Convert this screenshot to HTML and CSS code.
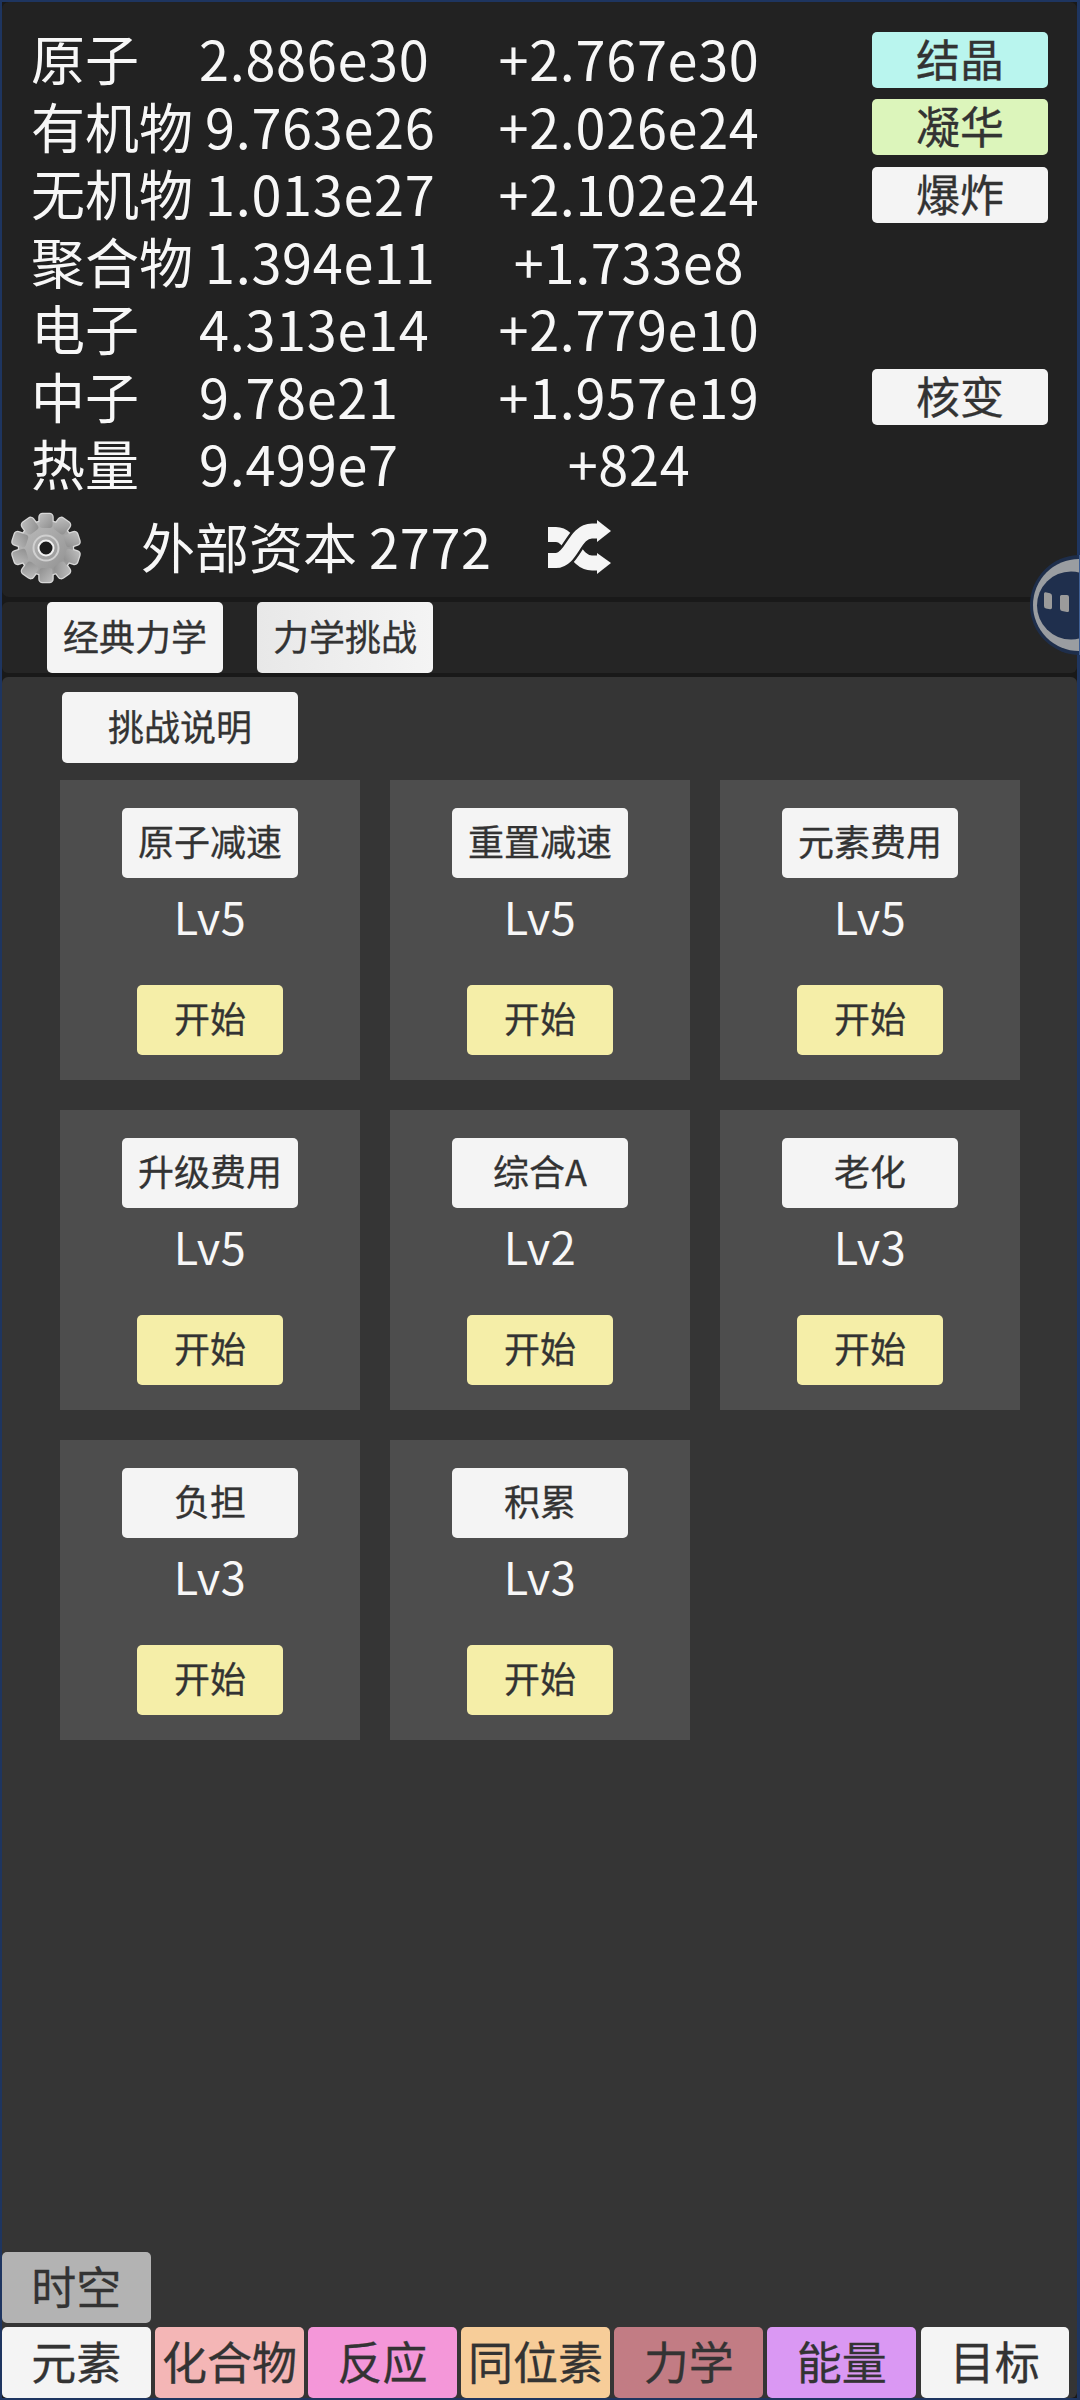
FILE: index.html
```html
<!DOCTYPE html>
<html lang="zh">
<head>
<meta charset="utf-8">
<title>力学挑战</title>
<link rel="stylesheet" href="styles.css">
</head>
<body>
<div class="app">
  <section class="stats">
    <div class="row"><div class="info"><span class="name">原子</span><span class="num">2.886e30</span></div><div class="rate num">+2.767e30</div><button class="btn side cyan">结晶</button></div>
    <div class="row"><div class="info"><span class="name">有机物</span><span class="num">9.763e26</span></div><div class="rate num">+2.026e24</div><button class="btn side lime">凝华</button></div>
    <div class="row"><div class="info"><span class="name">无机物</span><span class="num">1.013e27</span></div><div class="rate num">+2.102e24</div><button class="btn side">爆炸</button></div>
    <div class="row"><div class="info"><span class="name">聚合物</span><span class="num">1.394e11</span></div><div class="rate num">+1.733e8</div></div>
    <div class="row"><div class="info"><span class="name">电子</span><span class="num">4.313e14</span></div><div class="rate num">+2.779e10</div></div>
    <div class="row"><div class="info"><span class="name">中子</span><span class="num">9.78e21</span></div><div class="rate num">+1.957e19</div><button class="btn side">核变</button></div>
    <div class="row"><div class="info"><span class="name">热量</span><span class="num">9.499e7</span></div><div class="rate num">+824</div></div>
    <div class="capital">
      <svg class="gear" viewBox="0 0 72 74" aria-hidden="true">
        <defs>
          <linearGradient id="gearFill" x1="0" y1="0" x2="1" y2="1">
            <stop offset="0" stop-color="#bdbdbd"/>
            <stop offset="1" stop-color="#8f8f8f"/>
          </linearGradient>
          <g id="gearShape">
            <circle cx="36" cy="37" r="27"/>
            <rect x="29.5" y="3" width="13" height="14" rx="3"/>
            <rect x="29.5" y="3" width="13" height="14" rx="3" transform="rotate(36 36 37)"/>
            <rect x="29.5" y="3" width="13" height="14" rx="3" transform="rotate(72 36 37)"/>
            <rect x="29.5" y="3" width="13" height="14" rx="3" transform="rotate(108 36 37)"/>
            <rect x="29.5" y="3" width="13" height="14" rx="3" transform="rotate(144 36 37)"/>
            <rect x="29.5" y="3" width="13" height="14" rx="3" transform="rotate(180 36 37)"/>
            <rect x="29.5" y="3" width="13" height="14" rx="3" transform="rotate(216 36 37)"/>
            <rect x="29.5" y="3" width="13" height="14" rx="3" transform="rotate(252 36 37)"/>
            <rect x="29.5" y="3" width="13" height="14" rx="3" transform="rotate(288 36 37)"/>
            <rect x="29.5" y="3" width="13" height="14" rx="3" transform="rotate(324 36 37)"/>
          </g>
        </defs>
        <use href="#gearShape" fill="#d8d8d8" stroke="#d8d8d8" stroke-width="2.5"/>
        <use href="#gearShape" fill="url(#gearFill)"/>
        <circle cx="36" cy="37" r="12.5" fill="none" stroke="#d0d0d0" stroke-width="2"/>
        <circle cx="36" cy="37" r="7.5" fill="#1c1c1c" stroke="#f0f0f0" stroke-width="2"/>
      </svg>
      <span class="capital-text">外部资本 <span class="num">2772</span></span>
      <svg class="shuffle" viewBox="0 0 64 56" aria-hidden="true">
        <path d="M0 14.5H8C24 14.5 26 43 44 43H52" fill="none" stroke="#f5f5f5" stroke-width="15"/>
        <polygon points="49,33 63,43 49,54" fill="#f5f5f5"/>
        <path d="M0 40.5H8C24 40.5 26 11 44 11H52" fill="none" stroke="#222222" stroke-width="20"/>
        <path d="M0 40.5H8C24 40.5 26 11 44 11H52" fill="none" stroke="#f5f5f5" stroke-width="15"/>
        <polygon points="49,0 63,11 49,22" fill="#f5f5f5"/>
      </svg>
    </div>
  </section>

  <nav class="subtabs">
    <button class="btn tab">经典力学</button>
    <button class="btn tab shaded">力学挑战</button>
  </nav>

  <main class="main">
    <div class="content">
      <button class="btn help">挑战说明</button>
      <div class="cards">
        <div class="card"><button class="btn card-name">原子减速</button><div class="level">Lv5</div><button class="btn start">开始</button></div>
        <div class="card"><button class="btn card-name">重置减速</button><div class="level">Lv5</div><button class="btn start">开始</button></div>
        <div class="card"><button class="btn card-name">元素费用</button><div class="level">Lv5</div><button class="btn start">开始</button></div>
        <div class="card"><button class="btn card-name">升级费用</button><div class="level">Lv5</div><button class="btn start">开始</button></div>
        <div class="card"><button class="btn card-name">综合A</button><div class="level">Lv2</div><button class="btn start">开始</button></div>
        <div class="card"><button class="btn card-name">老化</button><div class="level">Lv3</div><button class="btn start">开始</button></div>
        <div class="card"><button class="btn card-name">负担</button><div class="level">Lv3</div><button class="btn start">开始</button></div>
        <div class="card"><button class="btn card-name">积累</button><div class="level">Lv3</div><button class="btn start">开始</button></div>
      </div>
    </div>
    <div class="bottom">
      <button class="btn nav spacetime">时空</button>
      <div class="nav-row">
        <button class="btn nav">元素</button>
        <button class="btn nav pink">化合物</button>
        <button class="btn nav magenta">反应</button>
        <button class="btn nav orange">同位素</button>
        <button class="btn nav rose">力学</button>
        <button class="btn nav violet">能量</button>
        <button class="btn nav">目标</button>
      </div>
    </div>
  </main>

  <svg class="float" viewBox="0 0 50 100" aria-hidden="true">
    <circle cx="50" cy="50" r="50" fill="#1e3050" fill-opacity="0.9"/>
    <circle cx="49" cy="50" r="46" fill="#9a9da1"/>
    <circle cx="41" cy="50.5" r="34" fill="#1f2f4d"/>
    <rect x="49" y="0" width="1" height="100" fill="#3f5f94"/>
    <path d="M15.5 37.2L20 38.2Q22 38.7 22 40.7V52.5Q22 54.5 20 54.2L16 53.5Q14 53 14 51V38.7Q14 37 15.5 37.2Z" fill="#9b9b9b"/>
    <path d="M31.5 40H37Q39 40 39 42V55.5Q39 57.5 37 57L32 56Q30 55.5 30 53.5V41.5Q30 40 31.5 40Z" fill="#9b9b9b"/>
  </svg>
</div>
</body>
</html>
```
FILE: styles.css
```css
* {
  box-sizing: border-box;
}

html,
body {
  margin: 0;
  height: 100%;
}

body {
  background: #1e3560;
  font-family: "Noto Sans CJK SC", "Noto Sans", sans-serif;
  color: #f7f7f7;
  overflow: hidden;
}

.app {
  position: relative;
  height: 2400px;
  border-style: solid;
  border-color: #1e3560;
  border-width: 2px 3px 2px 2px;
  background: #191919;
  display: flex;
  flex-direction: column;
}

.btn {
  display: block;
  margin: 0;
  padding: 0 0 4px;
  border: 0;
  border-radius: 5px;
  background: #f4f4f4;
  color: #333;
  font-family: inherit;
  line-height: 1.2;
  white-space: nowrap;
  -webkit-text-stroke: 0.3px #333;
}

.num {
  letter-spacing: 0.7px;
}

/* Top statistics panel */
.stats {
  height: 595px;
  padding: 24px 0 0 29px;
  background: #222;
  border-radius: 7px;
  font-size: 54px;
  line-height: 60px;
  flex: none;
}

.row {
  display: flex;
  align-items: center;
  height: 67.5px;
}

.info {
  display: flex;
  width: 415px;
  padding-bottom: 3px;
}

.name {
  min-width: 168px;
  padding-right: 12px;
}

.rate {
  width: 366px;
  padding-bottom: 3px;
  text-align: center;
}

.side {
  width: 176px;
  height: 56px;
  margin-left: 60px;
  font-size: 44px;
  line-height: 52px;
}

.cyan {
  background: #b9f5ee;
}

.lime {
  background: #dcf5bb;
}

.capital {
  display: flex;
  align-items: center;
  height: 82px;
  margin: 8px 0 0 -21px;
}

.gear {
  width: 72px;
  height: 74px;
  flex: none;
}

.capital-text {
  margin-left: 59px;
  padding-bottom: 4px;
  white-space: nowrap;
}

.shuffle {
  width: 64px;
  height: 56px;
  margin-left: 56px;
  flex: none;
}

/* Sub tabs */
.subtabs {
  display: flex;
  gap: 34px;
  height: 71px;
  margin-top: 5px;
  padding-left: 45px;
  background: #252525;
  border-radius: 6px;
  flex: none;
}

.tab {
  width: 176px;
  height: 71px;
  font-size: 36px;
}

.shaded {
  background: linear-gradient(90deg, #e8e8e8, #f4f4f4);
}

/* Main panel */
.main {
  display: flex;
  flex-direction: column;
  flex: 1;
  margin-top: 4px;
  background: #353535;
  border-radius: 6px;
}

.content {
  flex: 1;
  padding: 15px 0 0 58px;
}

.help {
  width: 236px;
  height: 71px;
  margin-left: 2px;
  font-size: 36px;
}

.cards {
  display: grid;
  grid-template-columns: repeat(3, 300px);
  grid-auto-rows: 300px;
  gap: 30px;
  margin-top: 17px;
}

.card {
  display: flex;
  flex-direction: column;
  align-items: center;
  padding-top: 28px;
  background: #4d4d4d;
}

.card-name {
  width: 176px;
  height: 70px;
  font-size: 36px;
}

.level {
  height: 107px;
  padding-top: 5px;
  font-size: 45px;
  letter-spacing: 0.5px;
  line-height: 65px;
}

.start {
  width: 146px;
  height: 70px;
  background: #f5eea8;
  font-size: 36px;
}

/* Bottom navigation */
.bottom {
  display: flex;
  flex-direction: column;
  gap: 4px;
  flex: none;
}

.nav {
  width: 148.6px;
  height: 71px;
  font-size: 45px;
}

.nav-row {
  display: flex;
  gap: 4.5px;
}

.spacetime {
  background: #b3b3b3;
}

.pink {
  background: #f4b6b6;
}

.magenta {
  background: #f497d9;
}

.orange {
  background: #f7cd99;
}

.rose {
  background: #c27c84;
}

.violet {
  background: #da98f3;
}

/* Floating handle, over the page edge */
.float {
  position: absolute;
  top: 553px;
  right: -3px;
  width: 50px;
  height: 100px;
}
```
